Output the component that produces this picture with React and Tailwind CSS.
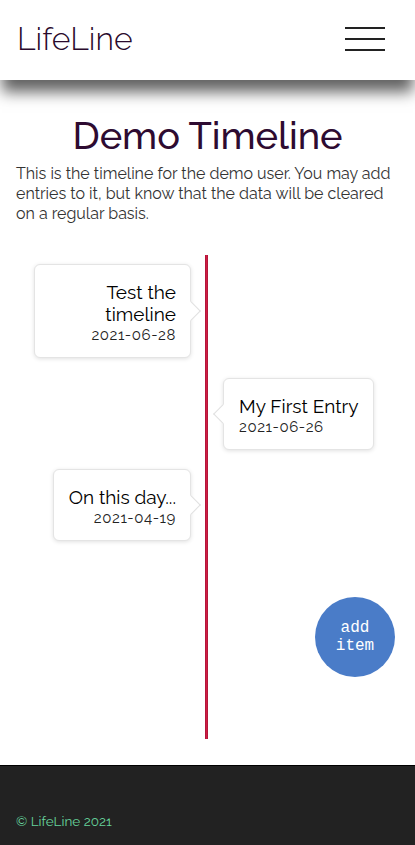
import React from "react";

const font = { fontFamily: "Raleway, Lato, 'Open Sans', sans-serif" };

function Card({ side, title, date }) {
  const left = side === "left";
  return (
    <div
      className={
        "relative bg-white rounded-[6px] border border-[#e4e4e4] shadow-[0_1px_4px_rgba(0,0,0,0.12)] pt-[16px] pb-[12px] " +
        (left ? "text-right pl-[15px] pr-[14px] max-w-[157px]" : "text-left pl-[15px] pr-[15px]")
      }
    >
      <div
        className={
          "absolute top-1/2 w-[14px] h-[14px] bg-white rotate-45 -translate-y-1/2 " +
          (left
            ? "right-[-8px] border-t border-r border-[#e0e0e0]"
            : "left-[-8px] border-b border-l border-[#e0e0e0]")
        }
      />
      <div className="relative text-[19px] leading-[22px] text-black">{title}</div>
      <div className="relative text-[15px] leading-[20px] text-[#222] tracking-[0.6px]">{date}</div>
    </div>
  );
}

export default function App() {
  return (
    <div className="min-h-[845px] flex flex-col bg-white" style={font}>
      <header className="relative z-10 h-[80px] bg-white flex items-center justify-between pl-[17px] pr-[30px] shadow-[0_14px_14px_-2px_rgba(0,0,0,0.62)]">
        <div className="text-[32px] font-light text-[#2a0a2c] -mt-[2px]">LifeLine</div>
        <div className="flex flex-col gap-[9px] w-[40px] -mt-[2px]">
          <div className="h-[2px] bg-[#222]" />
          <div className="h-[2px] bg-[#222]" />
          <div className="h-[2px] bg-[#222]" />
        </div>
      </header>

      <main className="flex-1 flex flex-col">
        <h1 className="text-center text-[38px] leading-[46px] text-[#2e0b31] font-medium mt-[33px]">Demo Timeline</h1>
        <p className="px-[16px] text-[16px] leading-[20px] text-[#333] mt-[5px]">
          This is the timeline for the demo user. You may add entries to it, but know that the data will be cleared on a regular basis.
        </p>

        <div className="relative grid grid-cols-[205px_3px_1fr] mt-[31px]">
          <div className="col-start-2 row-start-1 row-span-4 bg-[#d01c44] border-x border-[#b3163a]" />
          <div className="col-start-1 row-start-1 flex justify-end pr-[14px] pt-[9px]">
            <Card side="left" title="Test the timeline" date="2021-06-28" />
          </div>
          <div className="col-start-3 row-start-2 flex justify-start pl-[15px] pt-[20px]">
            <Card side="right" title="My First Entry" date="2021-06-26" />
          </div>
          <div className="col-start-1 row-start-3 flex justify-end pr-[14px] pt-[19px]">
            <Card side="left" title="On this day..." date="2021-04-19" />
          </div>
          <div className="col-start-1 row-start-4 h-[198px]" />
          <button
            className="absolute right-[20px] top-[342px] w-[80px] h-[80px] rounded-full bg-[#4a7cc8] text-white text-[16px] leading-[18px] flex items-center justify-center text-center"
            style={{ fontFamily: "'Liberation Mono', monospace" }}
          >
            add
            <br />
            item
          </button>
        </div>
        <div className="h-[26px]" />
      </main>

      <footer className="h-[80px] bg-[#222] border-t border-black flex items-end pb-[14px] pl-[16px]">
        <div className="text-[13.5px] text-[#66d39c]">© LifeLine 2021</div>
      </footer>
    </div>
  );
}
